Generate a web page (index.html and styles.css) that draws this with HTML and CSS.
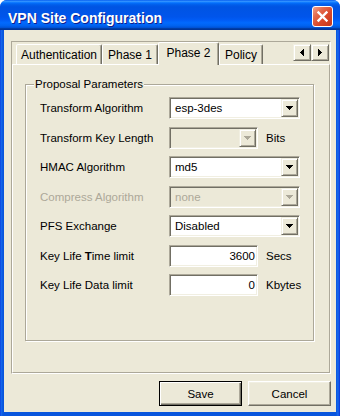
FILE: index.html
```html
<!DOCTYPE html>
<html lang="en">
<head>
  <meta charset="UTF-8">
  <meta name="viewport" content="width=device-width, initial-scale=1.0">
  <title>VPN Site Configuration</title>
  <link rel="stylesheet" href="styles.css">
</head>
<body>
  <div class="window">
    <div class="titlebar">
      <span class="title">VPN Site Configuration</span>
      <button class="close" aria-label="Close">
        <svg width="19" height="19" viewBox="0 0 19 19"><path d="M5.5 5.5L13.5 13.5M13.5 5.5L5.5 13.5" stroke="#fff" stroke-width="2.4" stroke-linecap="square"/></svg>
      </button>
    </div>

    <div class="client">
      <div class="tabctl">
        <div class="tabstrip">
          <div class="tab tab-auth">Authentication</div>
          <div class="tab tab-p1">Phase 1</div>
          <div class="tab tab-p2 active">Phase 2</div>
          <div class="tab tab-policy">Policy</div>
          <div class="scroller">
            <span class="scroll-btn">
              <svg width="4" height="7" viewBox="0 0 4 7" shape-rendering="crispEdges"><path d="M3 0h1v7H3z M2 1h1v5H2z M1 2h1v3H1z M0 3h1v1H0z" fill="#000"/></svg>
            </span>
            <span class="scroll-btn">
              <svg width="4" height="7" viewBox="0 0 4 7" shape-rendering="crispEdges"><path d="M0 0h1v7H0z M1 1h1v5H1z M2 2h1v3H2z M3 3h1v1H3z" fill="#000"/></svg>
            </span>
          </div>
        </div>

        <div class="page">
          <fieldset class="group">
            <legend>Proposal Parameters</legend>

            <div class="row">
              <span class="label">Transform Algorithm</span>
              <div class="combo wide">
                <span class="combo-text">esp-3des</span>
                <span class="drop"><svg width="7" height="4" viewBox="0 0 7 4" shape-rendering="crispEdges"><path d="M0 0h7v1H0z M1 1h5v1H1z M2 2h3v1H2z M3 3h1v1H3z" fill="#000"/></svg></span>
              </div>
            </div>

            <div class="row">
              <span class="label">Transform Key Length</span>
              <div class="combo narrow disabled">
                <span class="combo-text"></span>
                <span class="drop"><svg width="7" height="4" viewBox="0 0 7 4" shape-rendering="crispEdges"><path d="M0 0h7v1H0z M1 1h5v1H1z M2 2h3v1H2z M3 3h1v1H3z" fill="#ACA899"/></svg></span>
              </div>
              <span class="unit">Bits</span>
            </div>

            <div class="row">
              <span class="label">HMAC Algorithm</span>
              <div class="combo wide">
                <span class="combo-text">md5</span>
                <span class="drop"><svg width="7" height="4" viewBox="0 0 7 4" shape-rendering="crispEdges"><path d="M0 0h7v1H0z M1 1h5v1H1z M2 2h3v1H2z M3 3h1v1H3z" fill="#000"/></svg></span>
              </div>
            </div>

            <div class="row">
              <span class="label dim">Compress Algorithm</span>
              <div class="combo wide disabled">
                <span class="combo-text">none</span>
                <span class="drop"><svg width="7" height="4" viewBox="0 0 7 4" shape-rendering="crispEdges"><path d="M0 0h7v1H0z M1 1h5v1H1z M2 2h3v1H2z M3 3h1v1H3z" fill="#ACA899"/></svg></span>
              </div>
            </div>

            <div class="row">
              <span class="label">PFS Exchange</span>
              <div class="combo wide">
                <span class="combo-text">Disabled</span>
                <span class="drop"><svg width="7" height="4" viewBox="0 0 7 4" shape-rendering="crispEdges"><path d="M0 0h7v1H0z M1 1h5v1H1z M2 2h3v1H2z M3 3h1v1H3z" fill="#000"/></svg></span>
              </div>
            </div>

            <div class="row">
              <span class="label">Key Life <b>T</b>ime limit</span>
              <div class="edit">3600</div>
              <span class="unit">Secs</span>
            </div>

            <div class="row">
              <span class="label">Key Life Data limit</span>
              <div class="edit">0</div>
              <span class="unit">Kbytes</span>
            </div>
          </fieldset>
        </div>
      </div>

      <div class="actions">
        <button class="btn default">Save</button>
        <button class="btn">Cancel</button>
      </div>
    </div>
  </div>
</body>
</html>
```

FILE: styles.css
```css
html, body {
  margin: 0;
  padding: 0;
  background: #ffffff;
}
body {
  font-family: 'Liberation Sans', Arial, sans-serif;
  font-size: 11.5px;
  color: #000;
}
.window {
  width: 340px;
  height: 416px;
  display: flex;
  flex-direction: column;
  background: linear-gradient(to right, #0831D9 0, #166AEE 1px, #0855DD 3px, #0855DD 336px, #166AEE 338px, #0831D9 340px);
  border-radius: 7px 7px 0 0;
  overflow: hidden;
}
.titlebar {
  height: 30px;
  flex: none;
  display: flex;
  justify-content: space-between;
  align-items: flex-start;
  padding: 0 7px 0 8px;
  background: linear-gradient(to bottom, #0058EE 0%, #3593FF 4%, #288EFF 6%, #127DFF 8%, #036FFC 10%, #0262EE 14%, #0057E5 20%, #0054E3 24%, #0055EB 56%, #005BF5 66%, #026AFE 76%, #0062EF 86%, #0052D6 92%, #0040AB 94%, #003092 100%);
}
.title {
  margin-top: 10px;
  font-size: 14px;
  font-weight: bold;
  color: #fff;
  line-height: 16px;
  text-shadow: 1px 1px #0F1F8C;
}
.close {
  margin-top: 6px;
  width: 21px;
  height: 21px;
  padding: 0;
  display: flex;
  align-items: center;
  justify-content: center;
  border: 1px solid #fff;
  border-radius: 3px;
  background: linear-gradient(135deg, #F3A18A 0%, #E36A4D 30%, #D9482A 60%, #C4381C 100%);
}
.client {
  flex: 1;
  margin: 0 4px 4px 4px;
  background: #ECE9D8;
  display: flex;
  flex-direction: column;
}
.tabctl {
  width: 320px;
  height: 333px;
  box-sizing: border-box;
  margin: 11px 0 0 7px;
  border: 1px solid;
  border-color: #ACA899 #fff #fff #ACA899;
  display: flex;
  flex-direction: column;
}
.tabstrip {
  height: 22px;
  flex: none;
  display: flex;
  align-items: flex-end;
  padding-left: 4px;
}
.tab {
  height: 20px;
  box-sizing: border-box;
  font-size: 12px;
  display: flex;
  align-items: center;
  justify-content: center;
  border: 1px solid;
  border-bottom: none;
  border-color: #fff #716F64 transparent #fff;
  border-radius: 2px 2px 0 0;
  box-shadow: inset -1px 0 #ACA899;
  background: #ECE9D8;
}
.tab-auth { width: 86px; }
.tab-p1 { width: 56px; }
.tab-p2 { width: 61px; }
.tab-policy { width: 44px; }
.tab.active {
  height: 23px;
  margin-bottom: -1px;
  padding-bottom: 3px;
  position: relative;
  z-index: 1;
}
.scroller {
  margin-left: auto;
  margin-right: 1px;
  align-self: flex-start;
  margin-top: 2px;
  display: flex;
}
.scroll-btn {
  width: 18px;
  height: 17px;
  box-sizing: border-box;
  display: flex;
  align-items: center;
  justify-content: center;
  border: 1px solid;
  border-color: #F1EFE2 #716F64 #716F64 #F1EFE2;
  box-shadow: inset 1px 1px #fff, inset -1px -1px #ACA899;
}
.page {
  flex: 1;
  border: 1px solid;
  border-color: #fff #ACA899 #ACA899 #fff;
}
.group {
  width: 289px;
  height: 264px;
  box-sizing: border-box;
  margin: 12px 0 0 12px;
  padding: 6px 0 0 14px;
  border: 1px solid #ACA899;
  box-shadow: inset 1px 1px #fff, 1px 1px #fff;
}
.group legend {
  padding: 0 1px;
  margin-left: -6px;
  line-height: 14px;
  background: #ECE9D8;
}
.row {
  height: 22px;
  display: flex;
  align-items: center;
  margin-bottom: 7.5px;
}
.label {
  flex: 0 0 129px;
}
.label b {
  font-weight: bold;
}
.dim {
  color: #ACA899;
}
.combo, .edit {
  height: 22px;
  box-sizing: border-box;
  border: 1px solid;
  border-color: #ACA899 #fff #fff #ACA899;
  box-shadow: inset 1px 1px #716F64, inset -1px -1px #F1EFE2;
  background: #fff;
}
.combo {
  display: flex;
  align-items: stretch;
  padding: 1px;
}
.combo.wide { width: 131px; }
.combo.narrow { width: 89px; }
.combo-text {
  flex: 1;
  display: flex;
  align-items: center;
  padding-left: 4px;
}
.combo.disabled {
  background: #ECE9D8;
  color: #ACA899;
}
.drop {
  width: 17px;
  box-sizing: border-box;
  display: flex;
  align-items: center;
  justify-content: center;
  background: #ECE9D8;
  border: 1px solid;
  border-color: #F1EFE2 #716F64 #716F64 #F1EFE2;
  box-shadow: inset 1px 1px #fff, inset -1px -1px #ACA899;
}
.edit {
  width: 89px;
  display: flex;
  align-items: center;
  justify-content: flex-end;
  padding-right: 2px;
}
.unit {
  margin-left: 8px;
}
.actions {
  width: 320px;
  margin: 7px 0 0 7px;
  display: flex;
  justify-content: flex-end;
  gap: 6px;
}
.btn {
  width: 83px;
  height: 25px;
  padding: 0;
  font-family: 'Liberation Sans', Arial, sans-serif;
  font-size: 11.5px;
  font-weight: normal;
  color: #000;
  background: #ECE9D8;
  border: 1px solid;
  border-color: #fff #716F64 #716F64 #fff;
  box-shadow: inset -1px -1px #ACA899, inset 1px 1px #F1EFE2;
}
.btn.default {
  border-color: #000;
  box-shadow: inset 1px 1px #fff, inset -1px -1px #716F64, inset -2px -2px #ACA899;
}
```
